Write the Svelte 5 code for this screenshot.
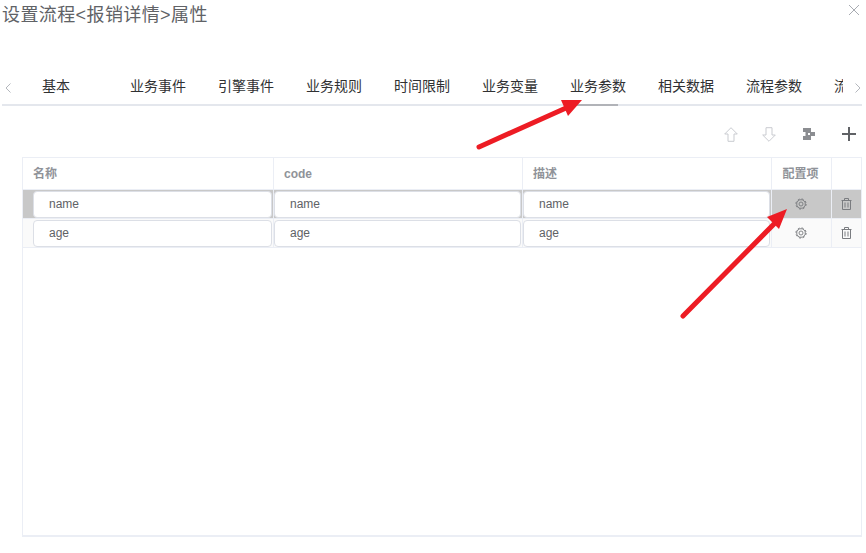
<script lang="ts">
  const tabs = ["基本", "业务事件", "引擎事件", "业务规则", "时间限制", "业务变量", "业务参数", "相关数据", "流程参数", "流程变量"];
  const active = "业务参数";
  const rows = [
    { value: "name", selected: true },
    { value: "age", selected: false },
  ];
</script>

<div class="dialog">
  <header>
    <h1>设置流程&lt;报销详情&gt;属性</h1>
    <svg class="close" width="12" height="12" viewBox="0 0 12 12">
      <path d="M1 1l10 10M11 1L1 11" stroke="#a8abb2" fill="none" />
    </svg>
  </header>

  <div class="tabbar">
    <svg class="chev prev" width="8" height="12" viewBox="0 0 8 12">
      <path d="M6.500 1.500L2 6l4.500 4.500" stroke="#b4b7bd" fill="none" />
    </svg>
    <div class="tabs">
      {#each tabs as tab}
        <div class="tab" class:active={tab === active}><span>{tab}</span></div>
      {/each}
    </div>
    <svg class="chev" width="8" height="12" viewBox="0 0 8 12">
      <path d="M1.500 1.500L6 6l-4.500 4.500" stroke="#b4b7bd" fill="none" />
    </svg>
  </div>

  <div class="toolbar">
    <svg class="up" width="14" height="15" viewBox="0 0 14 15">
      <path d="M7 .7L.7 7h3.300v7.300h6V7h3.300z" stroke="#c9cbd0" fill="none" />
    </svg>
    <svg class="down" width="14" height="15" viewBox="0 0 14 15">
      <path d="M7 14.300L.7 8h3.300V.7h6V8h3.300z" stroke="#c9cbd0" fill="none" />
    </svg>
    <svg width="12" height="12" viewBox="0 0 12 12">
      <path d="M0 0h8v4h4v4H8v4H0V8h2.500V4H0z" fill="#8b8d91" />
      <rect x="5" y="5" width="2" height="2" fill="#fff" />
    </svg>
    <svg class="plus" width="14" height="14" viewBox="0 0 14 14">
      <path d="M7 0v14M0 7h14" stroke="#606266" stroke-width="2" fill="none" />
    </svg>
  </div>

  <div class="table">
    <div class="row head">
      <div class="cell">名称</div>
      <div class="cell">code</div>
      <div class="cell">描述</div>
      <div class="cell center">配置项</div>
      <div class="cell"></div>
    </div>
    {#each rows as row}
      <div class="row body" class:selected={row.selected}>
        <div class="cell first"><div class="input">{row.value}</div></div>
        <div class="cell"><div class="input">{row.value}</div></div>
        <div class="cell"><div class="input">{row.value}</div></div>
        <div class="cell center">
          <svg width="12" height="12" viewBox="0 0 12 12">
            <circle cx="6" cy="6" r="4.300" stroke="#77797d" stroke-width=".9" fill="none" />
            <circle cx="6" cy="6" r="5.100" stroke="#77797d" stroke-width="1" stroke-dasharray="2 2" fill="none" />
            <circle cx="6" cy="6" r="2" stroke="#77797d" stroke-width=".9" fill="none" />
          </svg>
        </div>
        <div class="cell center">
          <svg width="11" height="12" viewBox="0 0 11 12">
            <path d="M.5 2.500h10M3.500 2.500V.5h4v2M1.500 2.500v9h8v-9M4 4.500v5M7 4.500v5" stroke="#7a7c80" fill="none" />
          </svg>
        </div>
      </div>
    {/each}
  </div>

  <!-- annotation arrows drawn over the screenshot -->
  <svg class="arrows" width="866" height="553" viewBox="0 0 866 553">
    <path d="M479 147L566 108" stroke="#ed1c24" stroke-width="5" stroke-linecap="round" fill="none" />
    <path d="M582 100L561 100L568 116z" fill="#ed1c24" />
    <path d="M683 316L776 222" stroke="#ed1c24" stroke-width="5" stroke-linecap="round" fill="none" />
    <path d="M787 209L767 217L779 229z" fill="#ed1c24" />
  </svg>
</div>

<style>
  :global(body) {
    margin: 0;
    background: #fff;
  }

  .dialog {
    position: relative;
    width: 866px;
    height: 553px;
    overflow: hidden;
    font-family: "Liberation Sans", "Noto Sans CJK SC", sans-serif;
  }

  header {
    display: flex;
    justify-content: space-between;
    height: 76px;
    padding: 4px 6px 0 2px;
    box-sizing: border-box;
  }

  h1 {
    margin: 0;
    color: #606266;
    font-size: 18px;
    font-weight: 400;
    line-height: 22px;
    letter-spacing: 0.4px;
  }

  .tabbar {
    display: flex;
    align-items: center;
    width: 860px;
    height: 28px;
    margin-left: 2px;
    border-bottom: 2px solid #e4e7ed;
    box-sizing: content-box;
  }

  .chev {
    flex: none;
    margin-bottom: 4px;
  }

  .prev {
    margin-left: 2px;
  }

  .tabs {
    display: flex;
    flex: 1;
    align-self: flex-start;
    height: 30px;
    margin: 0 11px 0 30px;
    overflow: hidden;
  }

  .tab {
    position: relative;
    flex: none;
    width: 88px;
    padding-top: 1px;
    color: #303133;
    font-size: 14px;
    line-height: 18px;
    box-sizing: border-box;
  }

  .tab span {
    display: block;
    white-space: nowrap;
  }

  .tab.active::after {
    content: "";
    position: absolute;
    left: 0;
    bottom: 0;
    width: 48px;
    height: 2px;
    background: #b1b3b8;
  }

  .toolbar {
    display: flex;
    align-items: center;
    justify-content: flex-end;
    gap: 27px;
    height: 50px;
    padding: 6px 10px 0 0;
    box-sizing: border-box;
  }

  .up {
    margin-right: -3px;
  }

  .plus {
    margin-top: -1px;
  }

  .table {
    height: 380px;
    margin: 1px 4px 0 22px;
    border: 1px solid #ebeef5;
    border-bottom-width: 2px;
    box-sizing: border-box;
  }

  .row {
    display: grid;
    grid-template-columns: 251px 249px 249px 60px 1fr;
  }

  .head {
    height: 31px;
    color: #909399;
    font-size: 12px;
    font-weight: 700;
    line-height: 33px;
  }

  .head .cell {
    padding-left: 10px;
  }

  .head .center {
    padding: 0 2px 0 0;
    align-items: flex-start;
  }

  .cell {
    border-right: 1px solid #ebeef5;
    box-sizing: border-box;
    min-width: 0;
  }

  .cell:last-child {
    border-right: 0;
  }

  .center {
    display: flex;
    align-items: center;
    justify-content: center;
    text-align: center;
  }

  .body {
    height: 28px;
    border-top: 1px solid #ebeef5;
    background: #fafafa;
    box-sizing: content-box;
  }

  .body:last-child {
    border-bottom: 1px solid #ebeef5;
  }

  .body .cell {
    padding: 1px 1px 0 0;
  }

  .body .center {
    padding: 0 1px 0 0;
  }

  .body .first {
    padding-left: 10px;
  }

  .body.selected {
    background: #c8c8c8;
  }

  .input {
    height: 27px;
    padding-left: 15px;
    border: 1px solid #dcdfe6;
    border-radius: 4px;
    background: #fff;
    color: #606266;
    font-size: 12px;
    line-height: 25px;
    box-sizing: border-box;
  }

  .arrows {
    position: absolute;
    top: 0;
    left: 0;
    pointer-events: none;
  }
</style>
